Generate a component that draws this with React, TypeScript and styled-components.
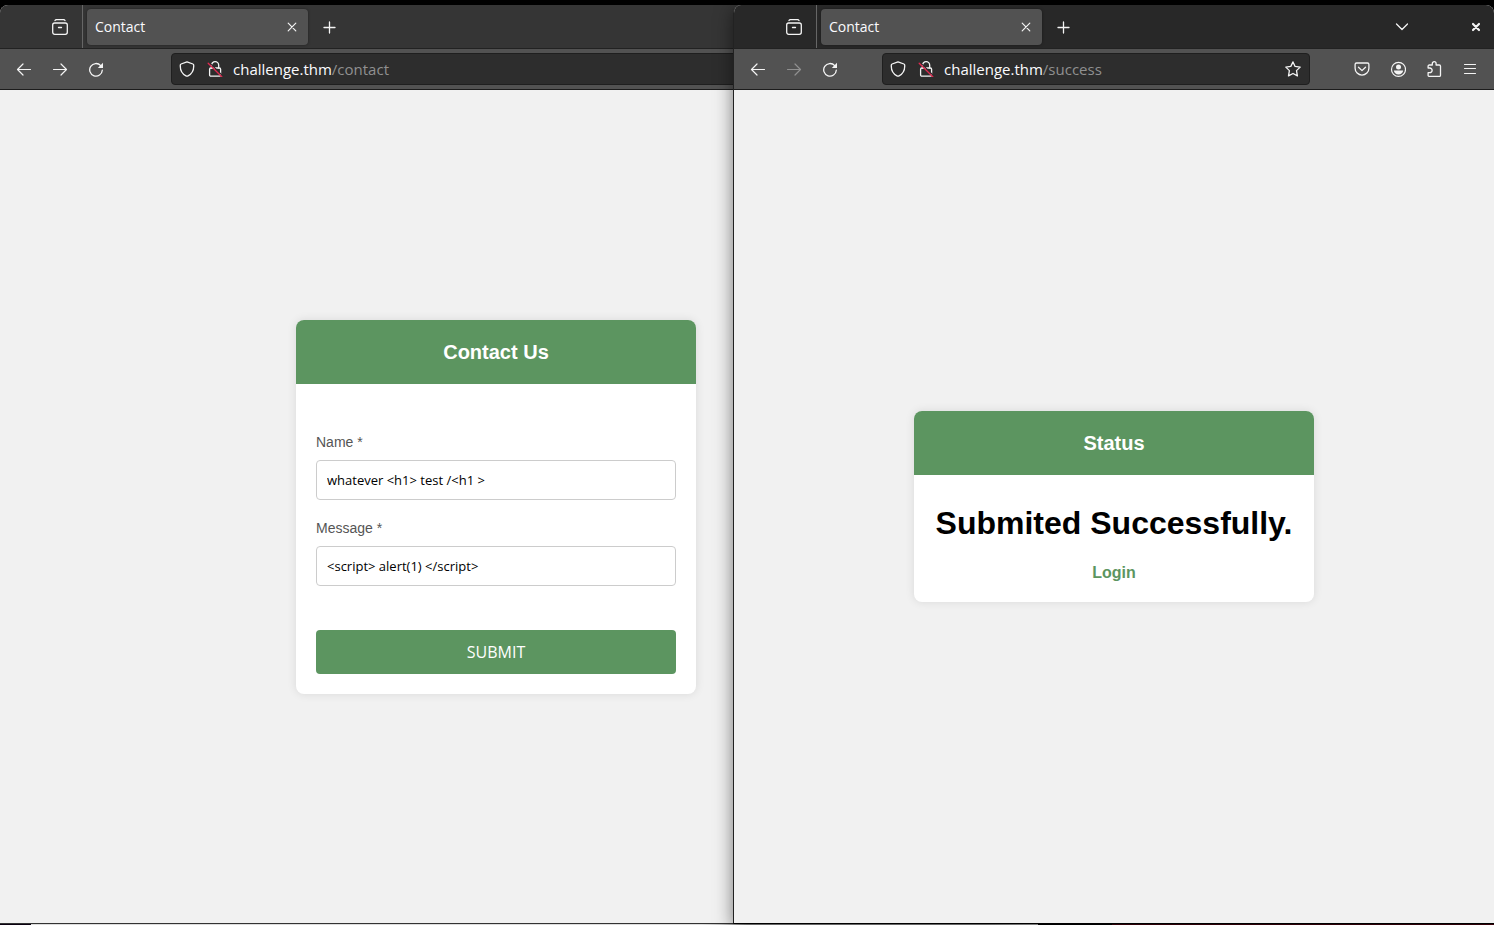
import React, { ReactNode } from 'react';
import styled, { createGlobalStyle } from 'styled-components';

const GlobalStyle = createGlobalStyle`
  *, *::before, *::after { box-sizing: border-box; }
  body { margin: 0; background: #000; overflow: hidden; }
  button, input { font: inherit; margin: 0; }
`;

const chromeFont = '"Open Sans", "Noto Sans", sans-serif';
const pageFont = '"Liberation Sans", Arial, sans-serif';
const green = '#5c9560';

const Desktop = styled.main`
  display: flex;
  flex-direction: column;
  min-height: 100vh;
  padding-top: 5px;
  background: #000;
`;

/* The two windows share the middle column, where the front one covers the back one. */
const Windows = styled.div`
  flex: 1;
  display: grid;
  grid-template-columns: minmax(0, 733fr) minmax(0, 259fr) minmax(0, 502fr);
`;

const Window = styled.section<{ $front?: boolean }>`
  grid-row: 1;
  grid-column: ${p => (p.$front ? '2 / 4' : '1 / 3')};
  z-index: ${p => (p.$front ? 1 : 0)};
  display: flex;
  flex-direction: column;
  overflow: hidden;
  border-bottom: 1px solid ${p => (p.$front ? '#000' : '#333')};
  border-left: ${p => (p.$front ? '1px solid #222' : '0')};
  border-radius: 8px 8px 0 0;
  box-shadow: ${p => (p.$front ? '0 4px 18px rgba(0, 0, 0, 0.5)' : 'none')};
  background: #f1f1f1;
`;

const TabBar = styled.div<{ $front?: boolean }>`
  display: flex;
  align-items: center;
  height: 44px;
  background: ${p => (p.$front ? '#282828' : '#353535')};
  border-bottom: 1px solid #222;
  color: #fbfbfe;
`;

const ViewArea = styled.div`
  display: flex;
  align-items: center;
  justify-content: flex-end;
  align-self: stretch;
  width: 83px;
  padding-right: 4px;
  border-right: 1px solid #666;
`;

const Tab = styled.div`
  display: flex;
  align-items: center;
  justify-content: space-between;
  width: 221px;
  height: 36px;
  margin: 0 4px;
  padding-left: 8px;
  border-radius: 4px;
  background: #525252;
  box-shadow: 0 0 3px rgba(0, 0, 0, 0.4);
  font: 14px/20px ${chromeFont};
`;

const IconButton = styled.button<{ $small?: boolean }>`
  display: flex;
  align-items: center;
  justify-content: center;
  flex: none;
  width: ${p => (p.$small ? '32px' : '36px')};
  height: 32px;
  padding: 0;
  border: 0;
  background: none;
  color: #f4f4f4;
  &:disabled { color: #909090; }
`;

const WindowControls = styled.div`
  display: flex;
  gap: 38px;
  margin-left: auto;
`;

const Toolbar = styled.div`
  display: flex;
  align-items: center;
  height: 41px;
  padding: 0 6px;
  background: #525252;
  border-bottom: 1px solid #1c1c1c;
`;

const Spring = styled.div<{ $wide?: boolean }>`
  flex: none;
  width: ${p => (p.$wide ? '57px' : '34px')};
`;

const UrlBar = styled.div`
  flex: 1;
  display: flex;
  align-items: center;
  min-width: 0;
  height: 32px;
  padding-left: 7px;
  border: 1px solid #1f1f1f;
  border-radius: 4px;
  background: #2d2d2d;
  color: #f4f4f4;
`;

const UrlIcons = styled.span`
  display: flex;
  flex: none;
  gap: 12px;
  margin-right: 10px;
`;

const Address = styled.span`
  flex: 1;
  font: 15px/20px ${chromeFont};
  color: #fbfbfe;
  white-space: nowrap;
`;

const Path = styled.span`
  color: #909090;
`;

const Page = styled.div`
  flex: 1;
  display: flex;
  align-items: center;
  justify-content: center;
  background: #f1f1f1;
  font-family: ${pageFont};
`;

const Card = styled.article`
  width: 400px;
  overflow: hidden;
  border-radius: 8px;
  background: #fff;
  box-shadow: 0 0 10px rgba(0, 0, 0, 0.1);
`;

const CardHeader = styled.h2`
  margin: 0;
  padding: 20px;
  background: ${green};
  color: #fff;
  font-size: 20px;
  line-height: 24px;
  text-align: center;
`;

const Form = styled.form`
  display: flex;
  flex-direction: column;
  gap: 20px;
  padding: 50px 20px 20px;
`;

const Field = styled.label`
  display: flex;
  flex-direction: column;
  gap: 10px;
  color: #555;
  font-size: 14px;
  line-height: 16px;
`;

const TextInput = styled.input`
  width: 100%;
  height: 40px;
  padding: 0 10px;
  border: 1px solid #ccc;
  border-radius: 4px;
  background: #fff;
  color: #000;
  font: 13px/20px ${chromeFont};
`;

const SubmitButton = styled.button`
  height: 44px;
  margin-top: 24px;
  border: 0;
  border-radius: 4px;
  background: ${green};
  color: #fff;
  font: 16px/24px ${chromeFont};
`;

const StatusBody = styled.div`
  display: flex;
  flex-direction: column;
  align-items: center;
  gap: 22px;
  padding: 30px 20px 20px;
`;

const StatusTitle = styled.h1`
  margin: 0;
  font-size: 32px;
  line-height: 36px;
  white-space: nowrap;
  color: #000;
`;

const LoginLink = styled.a`
  color: ${green};
  font-size: 16px;
  font-weight: bold;
  line-height: 19px;
  text-decoration: none;
`;

const DesktopEdge = styled.div`
  height: 1px;
  background: linear-gradient(
    to right,
    #0a0010 0 2.1%, #ddd 2.1% 47%, #999 50% 66%, #bbb 69.5%,
    #000 69.5% 74.4%, #46000c 74.4%
  );
`;

const Svg = ({ children, size = 16, weight = 1.2 }: { children: ReactNode; size?: number; weight?: number }) => (
  <svg width={size} height={size} viewBox="0 0 16 16" fill="none" stroke="currentColor"
    strokeWidth={weight} strokeLinecap="round" strokeLinejoin="round" aria-hidden="true">
    {children}
  </svg>
);

const ViewIcon = () => (
  <Svg weight={1.3}>
    <path d="M3 1.6C3.3.9 3.8.7 4.5.7h7c.7 0 1.2.2 1.5.9" />
    <rect x=".7" y="4" width="14.6" height="11.3" rx="2" />
    <path d="M6.500 8.500h3" />
  </Svg>
);
const BackIcon = () => <Svg><path d="M14.500 8.500H1.500M7 3L1.500 8.500 7 14" /></Svg>;
const ForwardIcon = () => <Svg><path d="M1.500 8.500h13M9 3l5.500 5.500L9 14" /></Svg>;
const ReloadIcon = () => (
  <Svg weight={1.3}>
    <path d="M12.700 4.600A6.300 6.300 0 1 0 14.300 9.200" />
    <path d="M15 1.800v5.200H9.800z" fill="currentColor" stroke="none" />
  </Svg>
);
const ShieldIcon = () => (
  <Svg weight={1.3}>
    <path d="M8 .8L13.900 3c.5.2.8.6.8 1.100v1.300c0 4.200-2.400 7.600-5.700 9.500a2 2 0 0 1-2 0C3.700 13 1.300 9.600 1.300 5.400V4.100c0-.5.3-.9.8-1.100z" />
  </Svg>
);
const LockIcon = () => (
  <Svg weight={1.3}>
    <path d="M4.500 7V4.300a3.600 3.600 0 0 1 7.200 0V7" />
    <rect x="2.600" y="7" width="11" height="8.200" rx="1.300" />
    <path d="M2.200 1.400l13.600 13.600" stroke="#2d2d2d" strokeWidth="1.200" />
    <path d="M1.200 2.200l13.600 13.600" stroke="#e22850" />
  </Svg>
);
const StarIcon = () => (
  <Svg weight={1.3}>
    <path d="M8 .9l2.100 4.500 5.100.7-3.700 3.500.9 5.300L8 12.500l-4.500 2.400.9-5.300L.8 6.100l5-.7z" />
  </Svg>
);
const PocketIcon = () => (
  <Svg weight={1.3}>
    <path d="M2.500 2h11c.8 0 1.400.6 1.400 1.400V7.200a6.900 6.900 0 0 1-13.800 0V3.400C1.100 2.600 1.700 2 2.500 2z" />
    <path d="M4.500 6.200L8 9.600l3.500-3.400" />
  </Svg>
);
const AccountIcon = () => (
  <Svg weight={1.2}>
    <circle cx="8.500" cy="8.400" r="7" />
    <circle cx="8.500" cy="5.900" r="2.500" fill="currentColor" stroke="none" />
    <path d="M3.900 9.500h9.200c0 2.200-2.100 4-4.600 4s-4.600-1.800-4.600-4z" fill="currentColor" stroke="none" />
  </Svg>
);
const PuzzleIcon = () => (
  <Svg weight={1.3}>
    <path d="M2.100 7V5.200c0-.7.5-1.200 1.200-1.200h3V2.600a1.900 1.900 0 0 1 3.800 0V4h3.200c.7 0 1.200.5 1.200 1.200v9c0 .7-.5 1.200-1.200 1.200h-10c-.7 0-1.200-.5-1.200-1.200V11.700h1.700a2.300 2.300 0 0 0 0-4.700z" />
  </Svg>
);
const MenuIcon = () => <Svg weight={1.2}><path d="M2.500 3.500h11M2.500 7.500h11M2.500 12.500h11" /></Svg>;
const CrossIcon = () => <Svg weight={1.2}><path d="M4.200 4.200l7.600 7.600M11.800 4.200l-7.600 7.600" /></Svg>;
const PlusIcon = () => <Svg weight={1.3}><path d="M7.500 3v11M2 8.500h11" /></Svg>;
const ChevronIcon = () => <Svg weight={1.3}><path d="M2.500 5L8 10.500 13.500 5" /></Svg>;
const CloseIcon = () => <Svg weight={2.2}><path d="M5 5l6 6M11 5l-6 6" /></Svg>;

interface BrowserProps {
  path: string;
  front?: boolean;
  children: ReactNode;
}

const Browser = ({ path, front, children }: BrowserProps) => (
  <Window $front={front}>
    <TabBar $front={front}>
      <ViewArea>
        <IconButton aria-label="View"><ViewIcon /></IconButton>
      </ViewArea>
      <Tab>
        Contact
        <IconButton $small aria-label="Close tab"><CrossIcon /></IconButton>
      </Tab>
      <IconButton aria-label="New tab"><PlusIcon /></IconButton>
      {front && (
        <WindowControls>
          <IconButton aria-label="List all tabs"><ChevronIcon /></IconButton>
          <IconButton aria-label="Close window"><CloseIcon /></IconButton>
        </WindowControls>
      )}
    </TabBar>
    <Toolbar>
      <IconButton aria-label="Back"><BackIcon /></IconButton>
      <IconButton aria-label="Forward" disabled={front}><ForwardIcon /></IconButton>
      <IconButton aria-label="Reload"><ReloadIcon /></IconButton>
      <Spring $wide={!front} />
      <UrlBar>
        <UrlIcons><ShieldIcon /><LockIcon /></UrlIcons>
        <Address>challenge.thm<Path>{path}</Path></Address>
        {front && <IconButton $small aria-label="Bookmark"><StarIcon /></IconButton>}
      </UrlBar>
      {front && (
        <>
          <Spring />
          <IconButton aria-label="Pocket"><PocketIcon /></IconButton>
          <IconButton aria-label="Account"><AccountIcon /></IconButton>
          <IconButton aria-label="Extensions"><PuzzleIcon /></IconButton>
          <IconButton aria-label="Menu"><MenuIcon /></IconButton>
        </>
      )}
    </Toolbar>
    <Page>{children}</Page>
  </Window>
);

export default function App() {
  return (
    <Desktop>
      <GlobalStyle />
      <Windows>
        <Browser path="/contact">
          <Card>
            <CardHeader>Contact Us</CardHeader>
            <Form onSubmit={e => e.preventDefault()}>
              <Field>
                Name *
                <TextInput name="name" defaultValue="whatever <h1> test /<h1 >" />
              </Field>
              <Field>
                Message *
                <TextInput name="message" defaultValue="<script> alert(1) </script>" />
              </Field>
              <SubmitButton type="submit">SUBMIT</SubmitButton>
            </Form>
          </Card>
        </Browser>
        <Browser path="/success" front>
          <Card>
            <CardHeader>Status</CardHeader>
            <StatusBody>
              <StatusTitle>Submited Successfully.</StatusTitle>
              <LoginLink href="#login">Login</LoginLink>
            </StatusBody>
          </Card>
        </Browser>
      </Windows>
      <DesktopEdge />
    </Desktop>
  );
}
